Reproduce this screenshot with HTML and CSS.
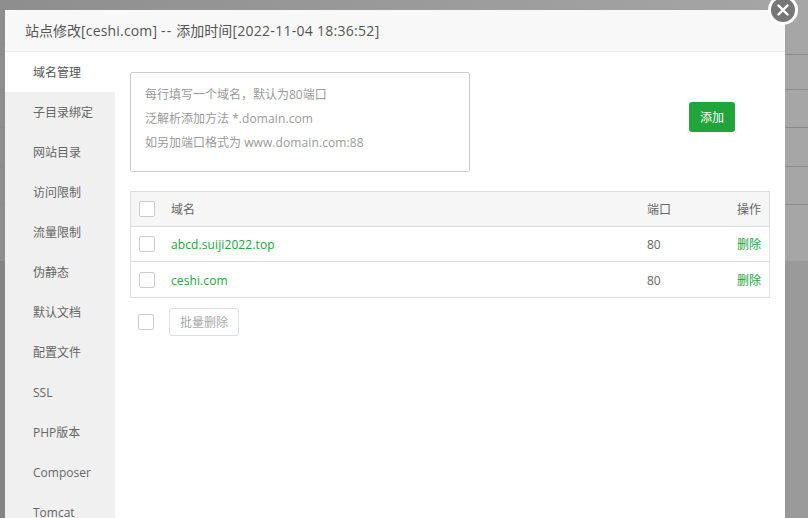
FILE: index.html
```html
<!DOCTYPE html>
<html lang="zh">
<head>
<meta charset="utf-8">
<title>站点修改</title>
<link rel="stylesheet" href="styles.css">
</head>
<body>
<div class="backdrop">
  <div class="bg-row r1"></div>
  <div class="bg-row r2"></div>
  <div class="bg-row r3"></div>
  <div class="bg-row r4"></div>
  <div class="bg-row r5"></div>
  <div class="bg-row r6"></div>
  <div class="bg-rest"></div>
</div>
<div class="edge-lines"></div>
<div class="dialog">
  <div class="title">站点修改<span class="lat-a">[ceshi.com]</span> <span class="dash">--</span> 添加时间<span class="lat-b">[2022-11-04 18:36:52]</span></div>
  <div class="body">
    <ul class="menu">
      <li class="active">域名管理</li>
      <li>子目录绑定</li>
      <li>网站目录</li>
      <li>访问限制</li>
      <li>流量限制</li>
      <li>伪静态</li>
      <li>默认文档</li>
      <li>配置文件</li>
      <li>SSL</li>
      <li>PHP版本</li>
      <li>Composer</li>
      <li>Tomcat</li>
    </ul>
    <div class="content">
      <div class="add-row">
        <div class="hint">
          <p>每行填写一个域名，默认为80端口</p>
          <p>泛解析添加方法 <span class="lat-c">*.domain.com</span></p>
          <p>如另加端口格式为 <span class="lat-c">www.domain.com:88</span></p>
        </div>
        <button class="add-btn">添加</button>
      </div>
      <div class="table">
        <div class="tr head">
          <span class="check"></span><span class="name">域名</span><span class="port">端口</span><span class="op">操作</span>
        </div>
        <div class="tr">
          <span class="check"></span><span class="name link lat-c">abcd.suiji2022.top</span><span class="port">80</span><span class="op link">删除</span>
        </div>
        <div class="tr last">
          <span class="check"></span><span class="name link lat-c">ceshi.com</span><span class="port">80</span><span class="op link">删除</span>
        </div>
      </div>
      <div class="batch">
        <span class="check"></span><button class="batch-btn">批量删除</button>
      </div>
    </div>
  </div>
</div>
<div class="close">
  <svg width="12" height="12" viewBox="0 0 12 12"><path d="M1.5 1.5 L10.5 10.5 M10.5 1.5 L1.5 10.5" stroke="#fff" stroke-width="2.4" stroke-linecap="round" fill="none"/></svg>
</div>
</body>
</html>
```
FILE: styles.css
```css
* { box-sizing: border-box; }
html, body { margin: 0; height: 100%; overflow: hidden; }
body { font-family: "Open Sans", "Noto Sans CJK SC", sans-serif; font-size: 12px; color: #666; position: relative; background: #a3a3a3; }
.backdrop { position: absolute; inset: 0; background: linear-gradient(90deg, #8e8e8e, #a6a6a6); }
.bg-row { border-bottom: 1px solid #8a8a8a; }
.r1 { height: 55px; }
.r2 { height: 35px; }
.r3 { height: 38px; }
.r4 { height: 39px; }
.r5 { height: 38px; }
.r6 { height: 56px; border-bottom: 0; }
.bg-rest { height: 257px; background: rgba(0, 0, 0, 0.07); }
.edge-lines { position: absolute; left: 0; top: 14px; width: 5px; height: 30px; border-top: 1px solid #8a8a8a; border-bottom: 1px solid #8a8a8a; }
.dialog { position: absolute; left: 5px; top: 10px; width: 780px; height: 508px; background: #fff; overflow: hidden; }
.title { height: 42px; line-height: 41px; padding-left: 20px; font-size: 14px; color: #555; background: #f8f8f8; border-bottom: 1px solid #eee; }
.lat-a { letter-spacing: 0.18px; }
.lat-b { letter-spacing: 0.28px; }
.lat-c { letter-spacing: 0.1px; }
.dash { letter-spacing: 1.4px; }
.body { display: flex; }
.menu { list-style: none; margin: 0; padding: 0; width: 110px; background: #f0f0f0; flex: none; height: 466px; }
.menu li { height: 40px; line-height: 42px; padding-left: 28px; color: #666; font-size: 12px; }
.menu li.active { background: #fff; color: #555; }
.content { flex: 1; padding: 20px 15px 0; }
.add-row { display: flex; align-items: flex-start; justify-content: space-between; padding-right: 35px; }
.hint { width: 340px; height: 100px; border: 1px solid #ccc; border-radius: 2px; padding: 10px 14px 0; color: #999; font-size: 12px; }
.hint p { margin: 0; line-height: 24px; }
.add-btn { width: 46px; height: 30px; margin-top: 30px; border: 0; border-radius: 3px; background: #20a53a; color: #fff; font: inherit; padding: 0; }
.table { margin-top: 19px; border: 1px solid #ddd; width: 640px; }
.tr { display: flex; align-items: center; height: 35px; border-top: 1px solid #ddd; }
.tr.head { border-top: 0; height: 34px; background: #f6f6f6; }
.tr.last { height: 36px; padding-top: 1px; }
.check { width: 16px; height: 16px; border: 1px solid #ccc; border-radius: 2px; background: #fff; flex: none; margin-left: 8px; }
.name { margin-left: 16px; flex: 1; }
.port { width: 90px; }
.op { width: 32px; }
.link { color: #20a53a; }
.batch { display: flex; align-items: center; margin-top: 10px; }
.batch-btn { width: 70px; height: 28px; margin-left: 15px; background: #fff; border: 1px solid #ddd; border-radius: 3px; color: #aaa; font: inherit; padding: 0; }
.close { position: absolute; left: 768px; top: -5px; width: 30px; height: 30px; border-radius: 50%; background: #777; border: 3px solid #fff; display: flex; align-items: center; justify-content: center; }
```
